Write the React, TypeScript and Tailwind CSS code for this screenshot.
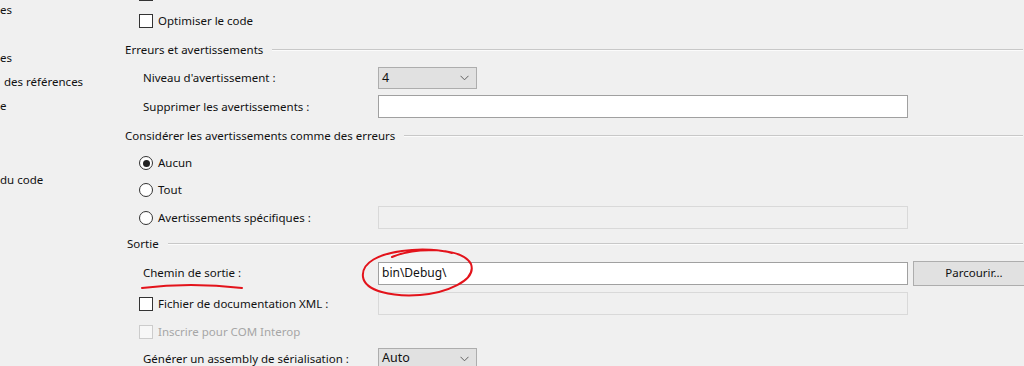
import React from 'react';

const Checkbox: React.FC<{ disabled?: boolean }> = ({ disabled }) => (
  <span
    className={`w-[14px] h-[14px] shrink-0 border ${disabled ? 'border-[#cccccc] bg-[#f7f7f7]' : 'border-[#333333] bg-white'}`}
  />
);

const Radio: React.FC<{ checked?: boolean }> = ({ checked }) => (
  <span className="w-[14px] h-[14px] shrink-0 rounded-full border border-[#333333] bg-white flex items-center justify-center">
    {checked && <span className="w-[7px] h-[7px] rounded-full bg-[#222222]" />}
  </span>
);

const Select: React.FC<{ value: string }> = ({ value }) => (
  <div className="w-[99px] h-[22px] shrink-0 border border-[#adadad] bg-[#e1e1e1] flex items-center justify-between pl-[3px] pr-[7px] text-[12.5px]">
    <span>{value}</span>
    <svg width="9" height="6" viewBox="0 0 9 6" fill="none">
      <path d="M0.5 0.8 L4.5 4.8 L8.5 0.8" stroke="#606060" strokeWidth="1" />
    </svg>
  </div>
);

const TextField: React.FC<{ value?: string; disabled?: boolean }> = ({ value, disabled }) => (
  <div
    className={`w-[530px] h-[23px] shrink-0 border flex items-center pl-[3px] text-[12px] ${disabled ? 'border-[#d9d9d9] bg-[#f0f0f0]' : 'border-[#a0a0a0] bg-white'}`}
  >
    {value}
  </div>
);

const GroupHeader: React.FC<{ title: string; className: string }> = ({ title, className }) => (
  <div className={`flex items-center ${className}`}>
    <span className="whitespace-nowrap">{title}</span>
    <div className="flex-1 ml-[9px] border-t border-[#c8c8c8] border-b border-b-[#fbfbfb]" />
  </div>
);

export default function App() {
  const leftItems = ['es', '', 'es', 'des références', 'e', '', '', 'du code'];

  return (
    <div className="relative w-[1024px] h-[366px] overflow-hidden bg-[#f0f0f0] text-[11.5px] text-[#111111] font-['Noto_Sans','Segoe_UI',sans-serif] flex">
      {/* Sidebar (clipped on the left) */}
      <div className="w-[125px] shrink-0 -mt-[2px]">
        {leftItems.map((item, i) => (
          <div key={i} className={`h-[24px] flex items-center whitespace-nowrap ${i === 3 ? 'pl-[4px]' : ''} ${i === 7 ? 'mt-[2px]' : ''}`}>
            {item}
          </div>
        ))}
      </div>

      {/* Main property page */}
      <div className="flex-1 -mt-[19px] pr-[1px] overflow-hidden">
        <div className="h-[26px] flex items-center pl-[14px]">
          <Checkbox />
        </div>
        <div className="h-[28px] flex items-center gap-[5px] pl-[14px]">
          <Checkbox />
          <span>Optimiser le code</span>
        </div>

        <GroupHeader title="Erreurs et avertissements" className="h-[29px]" />
        <div className="h-[28px] flex items-center pl-[18px]">
          <span className="w-[235px] shrink-0">Niveau d'avertissement :</span>
          <Select value="4" />
        </div>
        <div className="h-[29px] flex items-center pl-[18px]">
          <span className="w-[235px] shrink-0">Supprimer les avertissements :</span>
          <TextField />
        </div>

        <GroupHeader title="Considérer les avertissements comme des erreurs" className="h-[29px]" />
        <div className="h-[26px] flex items-center gap-[5px] pl-[14px]">
          <Radio checked />
          <span>Aucun</span>
        </div>
        <div className="h-[28px] flex items-center gap-[5px] pl-[14px]">
          <Radio />
          <span>Tout</span>
        </div>
        <div className="h-[27px] flex items-center pl-[14px]">
          <div className="w-[239px] shrink-0 flex items-center gap-[5px]">
            <Radio />
            <span>Avertissements spécifiques :</span>
          </div>
          <TextField disabled />
        </div>

        <GroupHeader title="Sortie" className="h-[26px] pl-[2px]" />
        <div className="h-[32px] flex items-center pl-[18px]">
          <span className="w-[235px] shrink-0">Chemin de sortie :</span>
          <TextField value={'bin\\Debug\\'} />
          <button className="ml-[5px] w-[122px] h-[25px] shrink-0 border border-[#adadad] bg-[#e1e1e1] flex items-center justify-center">
            Parcourir...
          </button>
        </div>
        <div className="h-[29px] flex items-center pl-[14px]">
          <div className="w-[239px] shrink-0 flex items-center gap-[5px]">
            <Checkbox />
            <span>Fichier de documentation XML :</span>
          </div>
          <TextField disabled />
        </div>
        <div className="h-[27px] flex items-center gap-[5px] pl-[14px] text-[#a6a6a6]">
          <Checkbox disabled />
          <span>Inscrire pour COM Interop</span>
        </div>
        <div className="h-[27px] flex items-center pl-[18px]">
          <span className="w-[235px] shrink-0">Générer un assembly de sérialisation :</span>
          <Select value="Auto" />
        </div>
      </div>

      {/* Red hand-drawn annotations */}
      <svg className="absolute inset-0 pointer-events-none" width="1024" height="366" viewBox="0 0 1024 366" fill="none">
        <path
          d="M392 257 C415 247 462 247 471 264 C477 281 445 293 420 295 C392 297 365 291 363 277 C361 262 380 254 402 251 C422 248 442 250 452 253"
          stroke="#e3131b"
          strokeWidth="2"
          strokeLinecap="round"
        />
        <path d="M142 288 Q190 282 242 288" stroke="#e3131b" strokeWidth="2" strokeLinecap="round" />
      </svg>
    </div>
  );
}
